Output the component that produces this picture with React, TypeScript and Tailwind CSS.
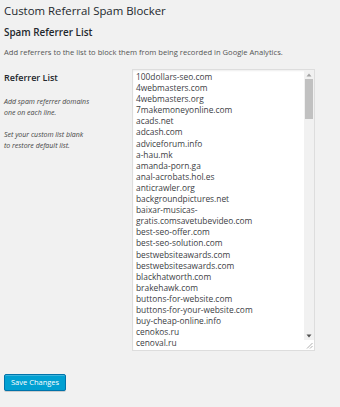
const referrers = [
  "100dollars-seo.com",
  "4webmasters.com",
  "4webmasters.org",
  "7makemoneyonline.com",
  "acads.net",
  "adcash.com",
  "adviceforum.info",
  "a-hau.mk",
  "amanda-porn.ga",
  "anal-acrobats.hol.es",
  "anticrawler.org",
  "backgroundpictures.net",
  "baixar-musicas-",
  "gratis.comsavetubevideo.com",
  "best-seo-offer.com",
  "best-seo-solution.com",
  "bestwebsiteawards.com",
  "bestwebsitesawards.com",
  "blackhatworth.com",
  "brakehawk.com",
  "buttons-for-website.com",
  "buttons-for-your-website.com",
  "buy-cheap-online.info",
  "cenokos.ru",
  "cenoval.ru",
];

function FakeScrollbar() {
  return (
    <div className="flex w-[10px] shrink-0 flex-col bg-[#f1f1f1]">
      <div className="flex h-[9px] items-center justify-center">
        <svg width="6" height="4" viewBox="0 0 6 4">
          <path d="M3 0.5 L5.5 3.5 L0.5 3.5 Z" fill="#a3a3a3" />
        </svg>
      </div>
      <div className="mx-[1px] h-[40px] bg-[#c1c1c1]" />
      <div className="flex-1" />
      <div className="flex h-[9px] items-center justify-center">
        <svg width="6" height="4" viewBox="0 0 6 4">
          <path d="M0.5 0.5 L5.5 0.5 L3 3.5 Z" fill="#505050" />
        </svg>
      </div>
      <div className="flex h-[10px] items-end justify-end bg-white p-[1px]">
        <svg width="7" height="7" viewBox="0 0 7 7">
          <path d="M6.5 1 L1 6.5 M6.5 4 L4 6.5" stroke="#9a9a9a" strokeWidth="0.8" />
        </svg>
      </div>
    </div>
  );
}

export default function App() {
  return (
    <div className="min-h-[407px] w-[340px] bg-[#f1f1f1] px-[4px] pt-[2px] font-['Open_Sans',sans-serif] text-[#444]">
      <h1 className="text-[11.4px] leading-[18px] text-[#23282d]">Custom Referral Spam Blocker</h1>
      <h2 className="mt-[5px] text-[9.9px] font-semibold leading-[14px] text-[#23282d]">
        Spam Referrer List
      </h2>
      <p className="mt-[7px] text-[7.6px] leading-[12px] text-[#555]">
        Add referrers to the list to block them from being recorded in Google Analytics.
      </p>

      <div className="mt-[11px] flex">
        <div className="w-[128px] shrink-0 pt-[3px]">
          <div className="text-[9px] font-semibold leading-[12px] text-[#23282d]">Referrer List</div>
          <div className="mt-[12px] text-[7px] italic leading-[11px] text-[#444]">
            Add spam referrer domains
            <br />
            one on each line.
          </div>
          <div className="mt-[11px] text-[7px] italic leading-[11px] text-[#444]">
            Set your custom list blank
            <br />
            to restore default list.
          </div>
        </div>

        <div className="flex h-[282px] w-[183px] overflow-hidden border border-[#ddd] bg-white shadow-[inset_0_1px_2px_rgba(0,0,0,0.07)]">
          <div className="flex-1 overflow-hidden pl-[3px] pt-[1px] text-[8.4px] leading-[11.1px] text-[#3c4044]">
            {referrers.map((r) => (
              <div key={r} className="whitespace-nowrap">
                {r}
              </div>
            ))}
          </div>
          <FakeScrollbar />
        </div>
      </div>

      <div className="mt-[16px]">
        <button className="h-[17px] rounded-[2px] border border-[#0073aa] bg-[#00a0d2] px-[6px] text-[7.5px] leading-[15px] text-white shadow-[inset_0_1px_0_rgba(120,200,230,0.5),0_1px_0_rgba(0,0,0,0.15)]">
          Save Changes
        </button>
      </div>
    </div>
  );
}
